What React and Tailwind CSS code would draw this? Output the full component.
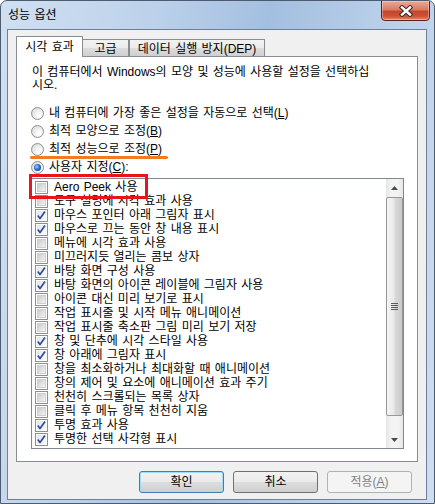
const effects = [
  ["Aero Peek 사용", false],
  ["도구 설명에 시각 효과 사용", false],
  ["마우스 포인터 아래 그림자 표시", true],
  ["마우스로 끄는 동안 창 내용 표시", true],
  ["메뉴에 시각 효과 사용", false],
  ["미끄러지듯 열리는 콤보 상자", false],
  ["바탕 화면 구성 사용", true],
  ["바탕 화면의 아이콘 레이블에 그림자 사용", true],
  ["아이콘 대신 미리 보기로 표시", false],
  ["작업 표시줄 및 시작 메뉴 애니메이션", false],
  ["작업 표시줄 축소판 그림 미리 보기 저장", false],
  ["창 및 단추에 시각 스타일 사용", true],
  ["창 아래에 그림자 표시", true],
  ["창을 최소화하거나 최대화할 때 애니메이션", false],
  ["창의 제어 및 요소에 애니메이션 효과 주기", false],
  ["천천히 스크롤되는 목록 상자", false],
  ["클릭 후 메뉴 항목 천천히 지움", false],
  ["투명 효과 사용", true],
  ["투명한 선택 사각형 표시", true],
];

const Radio = ({ checked, children }) => (
  <div className="flex h-[18px] items-center">
    <span className="flex h-[13px] w-[13px] shrink-0 items-center justify-center rounded-full border border-[#8e8f8f] bg-[radial-gradient(circle_at_65%_65%,#ffffff_10%,#d2d2d2_100%)]">
      {checked && (
        <span className="h-[7px] w-[7px] rounded-full bg-[radial-gradient(circle_at_40%_40%,#a9d3fb_0%,#2b6fcf_45%,#0b2f6e_100%)]" />
      )}
    </span>
    <span className="ml-[5px] whitespace-nowrap leading-[14px]">{children}</span>
  </div>
);

const Check = ({ checked }) => (
  <span className="relative flex h-[13px] w-[13px] shrink-0 items-center justify-center border border-[#8e8f8f] bg-white">
    <span
      className={
        checked
          ? "h-[9px] w-[9px] bg-[linear-gradient(135deg,#e4e4e4,#fbfbfb)]"
          : "h-[9px] w-[9px] border border-[#d0d0d0] bg-[linear-gradient(135deg,#cbcbcb,#f4f4f4)]"
      }
    />
    {checked && (
      <svg className="absolute left-0 top-0" width="11" height="11" viewBox="0 0 11 11">
        <path d="M1.8 5.6 L4 8.6 L9 1.6" fill="none" stroke="#2c4d9f" strokeWidth="1.7" strokeLinejoin="round" />
      </svg>
    )}
  </span>
);

const Arrow = ({ down }) => (
  <svg width="7" height="4" viewBox="0 0 7 4">
    <path d={down ? "M0 0 L7 0 L3.5 4Z" : "M0 4 L3.5 0 L7 4Z"} fill="#4a4a4a" />
  </svg>
);

const Btn = ({ children, kind }) => {
  let cls = "border-[#707070] bg-[linear-gradient(#f2f2f2_0%,#ebebeb_48%,#dddddd_52%,#cfcfcf_100%)]";
  if (kind === "default")
    cls = "border-[#3c7fb1] bg-[linear-gradient(#f2f2f2_0%,#ebebeb_48%,#dddddd_52%,#cfcfcf_100%)] shadow-[inset_0_0_0_1px_#9fdcf7]";
  if (kind === "disabled") cls = "border-[#adb2b5] bg-[#f4f4f4] text-[#838383]";
  return (
    <div className={`flex h-[22px] w-[85px] items-center justify-center rounded-[3px] border ${cls}`}>
      {children}
    </div>
  );
};

export default function App() {
  return (
    <div className="relative h-[504px] w-[435px] overflow-hidden rounded-t-[7px] border border-[#4c5b70] bg-[linear-gradient(100deg,#d0e0f2_0%,#bcd1ea_30%,#a3bfe0_52%,#b7cde8_72%,#cddef1_100%)] font-['Liberation_Sans','Noto_Sans_CJK_KR',sans-serif] text-[12px] text-black [word-spacing:1px]">
      {/* title bar */}
      <div className="flex h-[28px] items-center pl-[7px] leading-[14px]">성능 옵션</div>
      <div className="absolute right-[4px] top-[-1px] flex h-[21px] w-[49px] items-center justify-center rounded-b-[4px] border border-[#5b2218] bg-[linear-gradient(#e9ab9a_0%,#dc7a62_45%,#c4462b_55%,#cc5236_80%,#e48b6c_100%)] shadow-[inset_0_0_0_1px_rgba(255,220,210,0.45)]">
        <svg width="16" height="12" viewBox="0 0 16 12">
          <path d="M4 2.5 L12 9.5 M12 2.5 L4 9.5" stroke="#3b2a28" strokeWidth="4.4" strokeLinecap="square" />
          <path d="M4 2.5 L12 9.5 M12 2.5 L4 9.5" stroke="#ffffff" strokeWidth="2.4" strokeLinecap="square" />
        </svg>
      </div>

      {/* client */}
      <div className="ml-[6px] flex h-[471px] w-[420px] flex-col border border-[#6f7f95] bg-[#f0f0f0] px-[8px] pt-[6px]">
        <div className="flex h-[20px] items-end">
          <div className="relative z-10 -mb-px flex h-[21px] w-[67px] justify-center border border-b-0 border-[#898c95] bg-white pt-[3px] leading-[14px]">
            시각 효과
          </div>
          <div className="flex h-[17px] w-[46px] justify-center border border-b-0 border-l-0 border-[#898c95] bg-[linear-gradient(#f2f2f2_0%,#ebebeb_50%,#dddddd_51%,#cfcfcf_100%)] pt-[2px] leading-[14px]">
            고급
          </div>
          <div className="flex h-[17px] w-[136px] justify-center border border-b-0 border-[#898c95] bg-[linear-gradient(#f2f2f2_0%,#ebebeb_50%,#dddddd_51%,#cfcfcf_100%)] pt-[2px] leading-[14px]">
            데이터 실행 방지(DEP)
          </div>
        </div>

        <div className="h-[406px] border border-[#898c95] bg-white pl-[14px] pr-[13px] pt-[9px]">
          <p className="whitespace-nowrap pl-[1px] leading-[13px]">
            이 컴퓨터에서 Windows의 모양 및 성능에 사용할 설정을 선택하십
            <br />
            시오.
          </p>

          <div className="mt-[12px] flex flex-col">
            <Radio>
              내 컴퓨터에 가장 좋은 설정을 자동으로 선택(<u>L</u>)
            </Radio>
            <Radio>
              최적 모양으로 조정(<u>B</u>)
            </Radio>
            <Radio>
              최적 성능으로 조정(<u>P</u>)
            </Radio>
            <Radio checked>
              사용자 지정(<u>C</u>):
            </Radio>
          </div>

          <div className="mt-[2px] flex h-[271px] border border-[#828790]">
            <div className="flex flex-1 flex-col pl-[3px] pt-[1px]">
              {effects.map(([label, on]) => (
                <div key={label} className="flex h-[14px] items-center gap-[6px]">
                  <Check checked={on} />
                  <span className="whitespace-nowrap leading-[14px]">{label}</span>
                </div>
              ))}
            </div>
            <div className="flex w-[17px] flex-col bg-[linear-gradient(90deg,#e6e6e6,#f3f3f3_30%,#f3f3f3_70%,#e6e6e6)]">
              <div className="flex h-[17px] items-center justify-center">
                <Arrow />
              </div>
              <div className="mt-[1px] flex h-[219px] items-center justify-center rounded-[2px] border border-[#979797] bg-[linear-gradient(90deg,#f5f5f5_0%,#e9e9e9_45%,#d9d9d9_55%,#cacaca_100%)]">
                <div className="flex flex-col gap-[1px]">
                  <div className="h-px w-[7px] bg-[#5b5b5b]" />
                  <div className="h-px w-[7px] bg-[#5b5b5b]" />
                  <div className="h-px w-[7px] bg-[#5b5b5b]" />
                  <div className="h-px w-[7px] bg-[#5b5b5b]" />
                </div>
              </div>
              <div className="flex-1" />
              <div className="flex h-[17px] items-center justify-center">
                <Arrow down />
              </div>
            </div>
          </div>
        </div>

        <div className="mt-[9px] flex justify-end gap-[9px] pr-[6px]">
          <Btn kind="default">확인</Btn>
          <Btn>취소</Btn>
          <Btn kind="disabled">
            적용(<u>A</u>)
          </Btn>
        </div>
      </div>

      {/* annotations */}
      <div className="absolute left-[29px] top-[155px] h-[3px] w-[138px] rounded-full bg-[#f47b20]" />
      <div className="absolute left-[28px] top-[173px] h-[25px] w-[119px] border-[3px] border-[#e8141b]" />
    </div>
  );
}
